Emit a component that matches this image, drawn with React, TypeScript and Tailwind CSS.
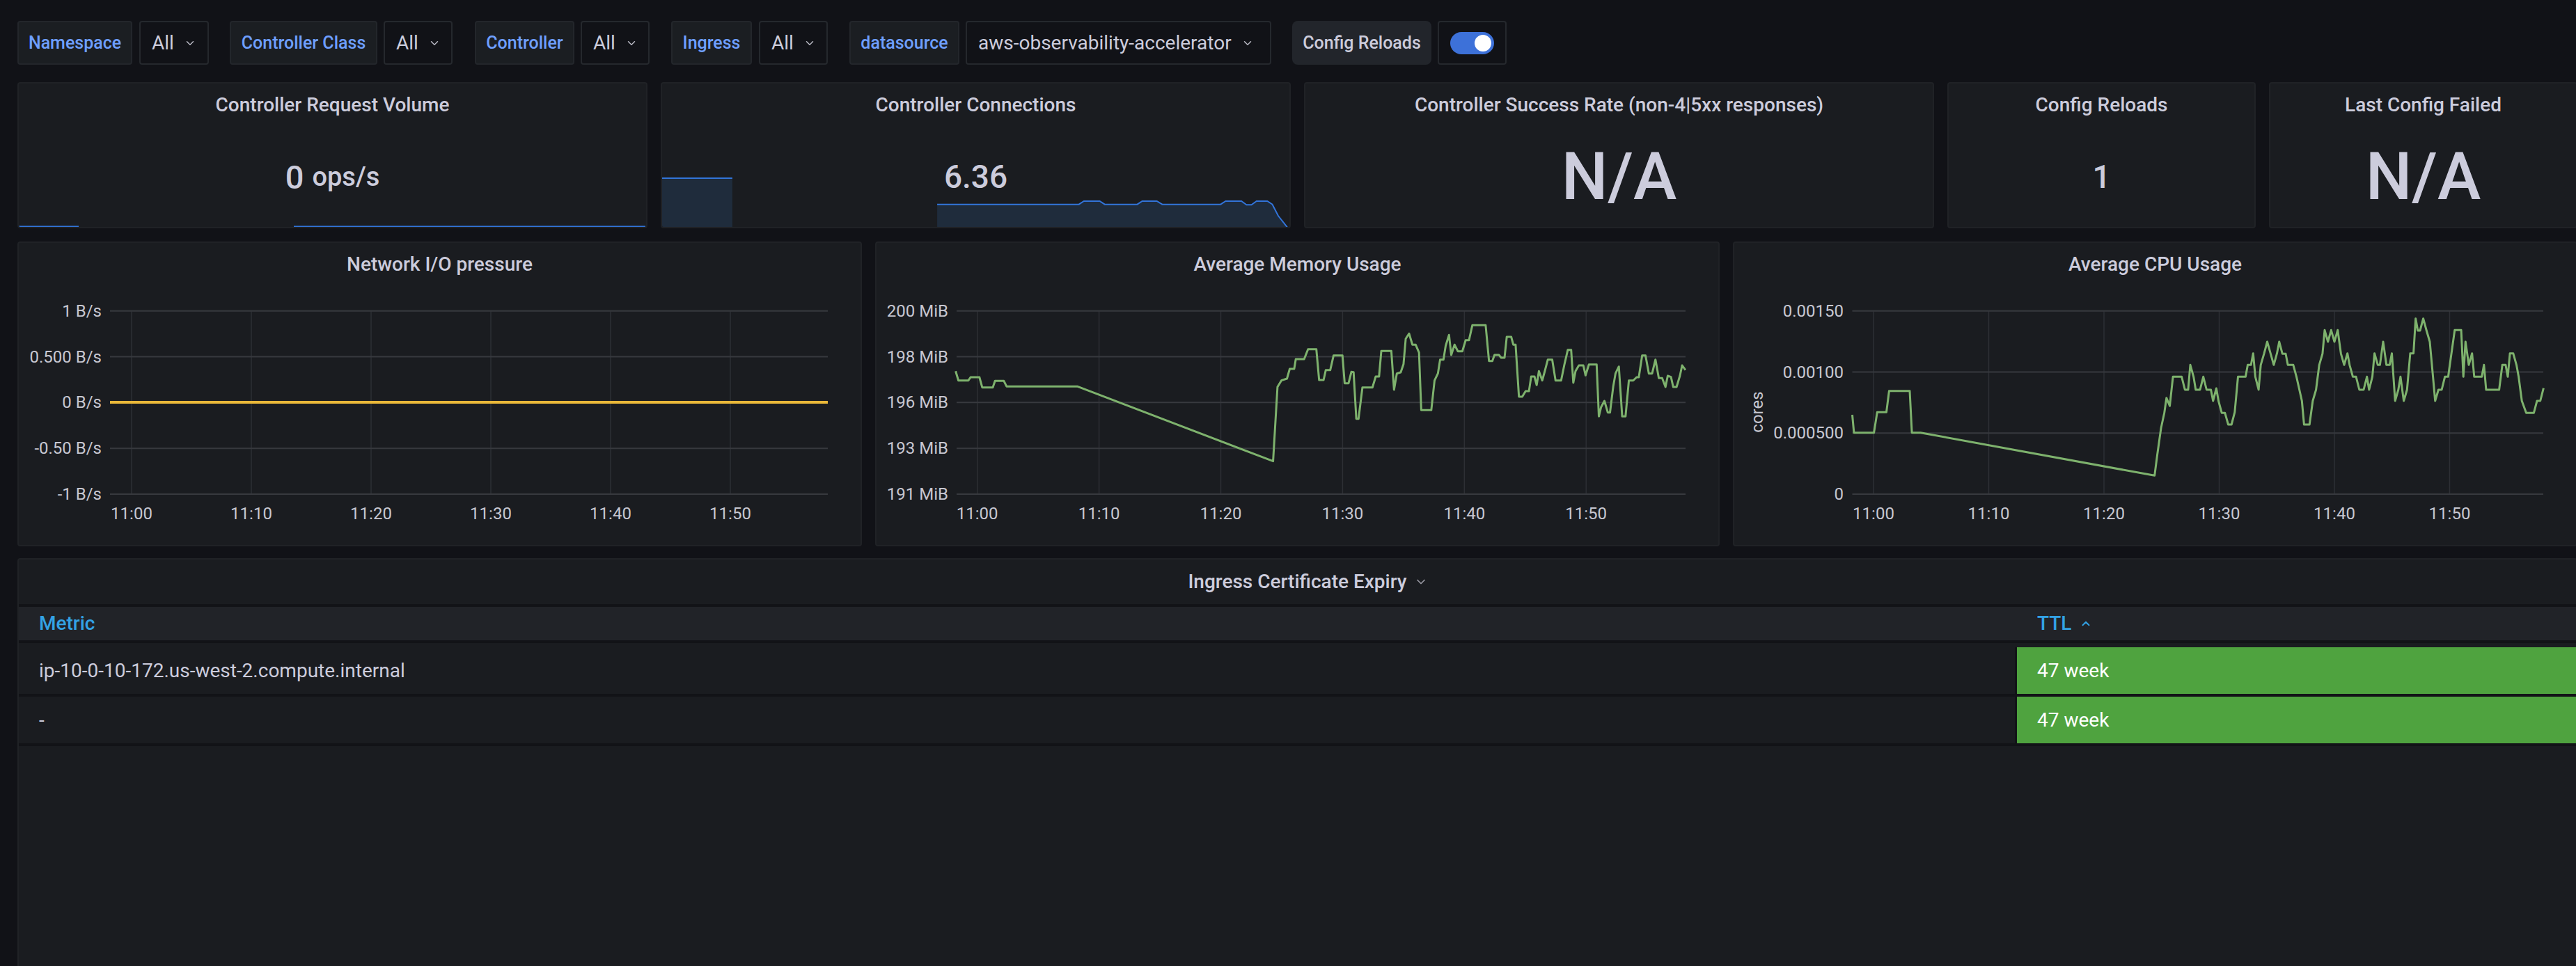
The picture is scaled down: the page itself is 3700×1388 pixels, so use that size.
import React from 'react';
import { ChevronDown, ChevronUp } from 'lucide-react';

// Grafana 7 dark theme, rendered at ~2x
const AXIS = '#c7c7d1';

type Pt = [number, number];

const toPath = (pts: Pt[], fx: (x: number) => number, fy: (y: number) => number) =>
  pts.map(([x, y], i) => `${i ? 'L' : 'M'}${fx(x).toFixed(1)},${fy(y).toFixed(1)}`).join(' ');

// ---------- Variable bar ----------

const VarLabel: React.FC<{ label: string; className: string }> = ({ label, className }) => (
  <div
    className={`flex h-[63px] items-center justify-center rounded-[4px] border-2 border-[#23262b] bg-[#1b1e22] text-[25px] font-medium text-[#6e9fff] ${className}`}
  >
    {label}
  </div>
);

const VarValue: React.FC<{ value: string; className: string }> = ({ value, className }) => (
  <div
    className={`flex h-[63px] items-center gap-[14px] rounded-[4px] border-2 border-[#25282d] bg-[#111217] pl-[16px] text-[28px] text-[#ccccdc] ${className}`}
  >
    <span>{value}</span>
    <ChevronDown size={18} strokeWidth={2} color="#b9b9c4" />
  </div>
);

const VariableBar: React.FC = () => (
  <div className="flex h-[63px] items-center">
    <VarLabel label="Namespace" className="w-[165px]" />
    <VarValue value="All" className="ml-[10px] w-[100px]" />
    <VarLabel label="Controller Class" className="ml-[30px] w-[212px]" />
    <VarValue value="All" className="ml-[9px] w-[99px]" />
    <VarLabel label="Controller" className="ml-[32px] w-[143px]" />
    <VarValue value="All" className="ml-[9px] w-[99px]" />
    <VarLabel label="Ingress" className="ml-[31px] w-[116px]" />
    <VarValue value="All" className="ml-[10px] w-[99px]" />
    <VarLabel label="datasource" className="ml-[31px] w-[158px]" />
    <VarValue value="aws-observability-accelerator" className="ml-[9px] w-[439px]" />
    <div className="ml-[30px] flex h-[63px] w-[200px] items-center justify-center rounded-[8px] bg-[#22252b] text-[25px] font-medium text-[#ccccdc]">
      Config Reloads
    </div>
    <div className="ml-[9px] flex h-[63px] w-[99px] items-center justify-center rounded-[4px] border-2 border-[#25282d] bg-[#111217]">
      <div className="flex h-[32px] w-[63px] items-center justify-end rounded-full bg-[#3d71d9] pr-[4px]">
        <div className="h-[24px] w-[24px] rounded-full bg-white" />
      </div>
    </div>
  </div>
);

// ---------- Panels ----------

const PanelTitle: React.FC<{ title: string; menu?: boolean; className?: string }> = ({ title, menu, className = 'h-[62px]' }) => (
  <div className={`flex shrink-0 items-center justify-center ${className}`}>
    <span className="relative text-[28px] font-medium text-[#ccccdc]">
      {title}
      {menu && (
        <span className="absolute left-full top-1/2 ml-[10px] -translate-y-1/2">
          <ChevronDown size={20} strokeWidth={2} color="#9a9aa4" />
        </span>
      )}
    </span>
  </div>
);

const StatPanel: React.FC<{
  title: string;
  width: number;
  span: string;
  spark?: React.ReactNode;
  children: React.ReactNode;
}> = ({ title, width, span, spark, children }) => (
  <div className={`relative flex h-[210px] flex-col overflow-hidden rounded-[4px] border-2 border-[#202226] bg-[#1a1c20] ${span}`}>
    {spark && (
      <svg
        className="absolute inset-0 h-full w-full"
        viewBox={`2 2 ${width - 4} 206`}
        preserveAspectRatio="none"
      >
        {spark}
      </svg>
    )}
    <div className="relative">
      <PanelTitle title={title} />
    </div>
    <div className="relative flex flex-1 items-center justify-center text-[#ccccdc]">{children}</div>
  </div>
);

// sparkline for Controller Connections, traced in zoom coords
const connPts: Pt[] = [
  [678, 551], [1018, 551], [1030, 537], [1068, 537], [1080, 551], [1158, 551], [1170, 537], [1205, 537],
  [1218, 551], [1358, 551], [1370, 537], [1408, 537], [1420, 553], [1432, 553], [1444, 537], [1470, 537],
  [1482, 551], [1496, 600], [1520, 655],
];
const cx = (x: number) => x / 1.668 - 9;
const cy = (y: number) => y / 3 - 8;

const ConnSpark: React.FC = () => {
  const line = toPath(connPts, cx, cy);
  return (
    <g>
      <path d="M0,138 L103,138 L103,212 L0,212 Z" fill="#1f2c3c" />
      <path d="M0,138 L103,138" stroke="#3274d9" strokeWidth={2} fill="none" />
      <path d={`${line} L${cx(678).toFixed(1)},212 Z`} fill="#1f2c3c" />
      <path d={line} stroke="#3274d9" strokeWidth={2} fill="none" />
    </g>
  );
};

const VolumeSpark: React.FC = () => (
  <g stroke="#3274d9" strokeWidth={2}>
    <line x1={0} x2={88} y1={207.5} y2={207.5} />
    <line x1={397} x2={902} y1={207.5} y2={207.5} />
  </g>
);

// ---------- Time series ----------

const X_LABELS = ['11:00', '11:10', '11:20', '11:30', '11:40', '11:50'];

interface ChartProps {
  width: number;
  ticks: { y: number; label: string }[];
  labelX: number;
  gridX0: number;
  vx0: number;
  vstep: number;
  axisLabel?: string;
  children?: React.ReactNode;
}

const TimeChart: React.FC<ChartProps> = ({ width, ticks, labelX, gridX0, vx0, vstep, axisLabel, children }) => {
  const top = ticks[0].y;
  const bottom = ticks[ticks.length - 1].y;
  const vx = X_LABELS.map((_, i) => vx0 + vstep * i);
  return (
    <svg width={width - 4} height={372} viewBox={`2 0 ${width - 4} 372`} className="block" fontFamily="Roboto, sans-serif">
      {vx.map((x) => (
        <line key={x} x1={x} x2={x} y1={top} y2={bottom} stroke="#2d2f34" strokeWidth={1.5} />
      ))}
      {ticks.map((t) => (
        <g key={t.label}>
          <line x1={gridX0} x2={1164} y1={t.y} y2={t.y} stroke="#37393e" strokeWidth={2} />
          <text x={labelX} y={t.y} textAnchor="end" dominantBaseline="central" fontSize={24} fill={AXIS}>
            {t.label}
          </text>
        </g>
      ))}
      {vx.map((x, i) => (
        <text key={`l${i}`} x={x} y={327} textAnchor="middle" dominantBaseline="central" fontSize={24} fill={AXIS}>
          {X_LABELS[i]}
        </text>
      ))}
      {axisLabel && (
        <text
          x={35}
          y={181}
          transform="rotate(-90 35 181)"
          textAnchor="middle"
          dominantBaseline="central"
          fontSize={24}
          fill={AXIS}
        >
          {axisLabel}
        </text>
      )}
      {children}
    </svg>
  );
};

const GraphPanel: React.FC<{ title: string; children: React.ReactNode }> = ({ title, children }) => (
  <div className="col-span-8 flex h-[438px] flex-col overflow-hidden rounded-[4px] border-2 border-[#202226] bg-[#1a1c20]">
    <PanelTitle title={title} />
    {children}
  </div>
);

const memPts: Pt[] = [
  [155, 580], [160, 620], [178, 620], [182, 606], [198, 606], [203, 650], [222, 650], [226, 622], [242, 622],
  [247, 646], [375, 646], [727, 968], [735, 648], [742, 620], [752, 612], [757, 570], [765, 570], [768, 528],
  [783, 528], [790, 485], [805, 485], [810, 618], [818, 618], [822, 575], [830, 575], [836, 512], [852, 512],
  [856, 632], [863, 632], [868, 583], [872, 584], [877, 785], [881, 785], [888, 650], [906, 650], [912, 603],
  [918, 603], [922, 493], [940, 493], [945, 660], [950, 590], [957, 585], [962, 550], [966, 440], [972, 418],
  [978, 466], [984, 466], [990, 500], [994, 748], [1012, 748], [1018, 620], [1024, 590], [1028, 530],
  [1034, 530], [1038, 470], [1044, 424], [1048, 510], [1054, 466], [1060, 494], [1068, 494], [1074, 446],
  [1080, 446], [1086, 382], [1110, 382], [1116, 536], [1122, 536], [1126, 510], [1134, 510], [1138, 522],
  [1144, 522], [1148, 432], [1156, 432], [1160, 466], [1164, 466], [1170, 690], [1176, 690], [1182, 666],
  [1188, 666], [1192, 603], [1198, 603], [1202, 640], [1206, 580], [1212, 620], [1216, 585], [1222, 530],
  [1230, 530], [1236, 620], [1246, 620], [1252, 550], [1258, 488], [1264, 488], [1268, 630], [1272, 580],
  [1278, 555], [1286, 555], [1290, 598], [1296, 551], [1310, 551], [1314, 775], [1318, 735], [1324, 708],
  [1330, 758], [1334, 758], [1340, 645], [1344, 590], [1350, 560], [1356, 775], [1362, 775], [1368, 620],
  [1376, 620], [1382, 606], [1386, 606], [1392, 512], [1398, 512], [1404, 590], [1410, 590], [1416, 530],
  [1422, 610], [1428, 610], [1434, 648], [1438, 600], [1444, 605], [1448, 648], [1454, 648], [1460, 600],
  [1464, 555], [1470, 575],
];

const cpuPts: Pt[] = [
  [232, 768], [235, 845], [272, 845], [278, 757], [295, 757], [300, 665], [338, 665], [342, 845], [358, 845],
  [790, 1030], [795, 940], [802, 825], [808, 760], [812, 695], [818, 730], [824, 604], [840, 604], [846, 660],
  [852, 660], [856, 553], [862, 604], [866, 660], [874, 660], [880, 604], [886, 660], [894, 660], [898, 708],
  [904, 654], [908, 708], [914, 760], [920, 760], [926, 810], [932, 810], [938, 757], [944, 604], [958, 604],
  [962, 553], [968, 553], [972, 503], [976, 604], [982, 660], [986, 553], [992, 505], [998, 453], [1004, 503],
  [1010, 553], [1016, 503], [1020, 453], [1026, 505], [1032, 505], [1036, 553], [1046, 553], [1052, 604],
  [1062, 708], [1066, 810], [1076, 810], [1082, 708], [1088, 660], [1094, 553], [1100, 505], [1104, 403],
  [1110, 453], [1116, 403], [1122, 453], [1128, 403], [1134, 505], [1140, 553], [1146, 503], [1150, 553],
  [1156, 604], [1162, 604], [1168, 660], [1176, 660], [1182, 604], [1186, 660], [1192, 604], [1196, 503],
  [1202, 553], [1206, 553], [1212, 453], [1218, 553], [1224, 553], [1228, 503], [1234, 708], [1240, 660],
  [1244, 604], [1250, 708], [1256, 660], [1262, 503], [1268, 503], [1272, 353], [1276, 405], [1280, 405],
  [1286, 353], [1292, 405], [1298, 453], [1304, 604], [1308, 708], [1314, 660], [1320, 660], [1326, 604],
  [1332, 604], [1338, 503], [1344, 403], [1356, 403], [1360, 604], [1364, 453], [1370, 553], [1376, 503],
  [1380, 604], [1394, 604], [1398, 553], [1402, 660], [1426, 660], [1432, 553], [1438, 553], [1442, 604],
  [1446, 503], [1452, 503], [1458, 553], [1462, 604], [1468, 708], [1476, 760], [1490, 760], [1496, 708],
  [1502, 708], [1508, 653],
];

const bodyY = (y: number) => y / 3 - 71;

// ---------- Table ----------

const CertTable: React.FC = () => (
  <div className="col-span-24 flex h-[640px] flex-col overflow-hidden rounded-[4px] border-2 border-[#202226] bg-[#1a1c20]">
    <PanelTitle title="Ingress Certificate Expiry" menu className="h-[64px]" />
    <div className="h-[4px] shrink-0 bg-[#121317]" />
    {/* Header */}
    <div className="flex h-[48px] shrink-0 items-center bg-[#212328] text-[28px] font-medium text-[#33a2e5]">
      <div className="w-[2867px] pl-[29px]">Metric</div>
      <div className="flex items-center gap-[12px] pl-[32px]">
        TTL
        <ChevronUp size={18} strokeWidth={2.5} color="#33a2e5" />
      </div>
    </div>
    <div className="h-[4px] shrink-0 bg-[#121317]" />
    <div className="h-[6px] shrink-0" />
    {[
      'ip-10-0-10-172.us-west-2.compute.internal',
      '-',
    ].map((metric) => (
      <React.Fragment key={metric}>
        <div className="flex h-[67px] shrink-0 items-center text-[28px]">
          <div className="w-[2867px] pl-[29px] text-[#ccccdc]">{metric}</div>
          <div className="flex h-full flex-1 items-center border-l-[3px] border-[#121317] bg-[#4fa33f] pl-[29px] text-white">
            47 week
          </div>
        </div>
        <div className="h-[4px] shrink-0 bg-[#121317]" />
      </React.Fragment>
    ))}
  </div>
);

// ---------- Page ----------

export default function App() {
  return (
    <div className="h-[1388px] w-[3700px] overflow-hidden bg-[#111217] pl-[25px] pt-[30px] font-['Roboto','Noto_Sans',sans-serif] text-[#ccccdc]">
      <VariableBar />

      {/* Stat row */}
      <div className="mt-[25px] grid w-[3677px] grid-cols-24 gap-x-[19px]">
        <StatPanel title="Controller Request Volume" width={905} span="col-span-6" spark={<VolumeSpark />}>
          <span className="text-[47px] font-medium leading-none">0</span>
          <span className="ml-[12px] text-[38px] font-medium leading-none">ops/s</span>
        </StatPanel>
        <StatPanel title="Controller Connections" width={906} span="col-span-6" spark={<ConnSpark />}>
          <span className="text-[46px] font-medium leading-none">6.36</span>
        </StatPanel>
        <StatPanel title="Controller Success Rate (non-4|5xx responses)" width={906} span="col-span-6">
          <span className="text-[94px] font-medium leading-none">N/A</span>
        </StatPanel>
        <StatPanel title="Config Reloads" width={443} span="col-span-3">
          <span className="text-[46px] font-medium leading-none">1</span>
        </StatPanel>
        <StatPanel title="Last Config Failed" width={443} span="col-span-3">
          <span className="text-[94px] font-medium leading-none">N/A</span>
        </StatPanel>
      </div>

      {/* Graph row */}
      <div className="mt-[19px] grid w-[3677px] grid-cols-24 gap-x-[19px]">
        <GraphPanel title="Network I/O pressure">
          <TimeChart
            width={1213}
            labelX={121}
            gridX0={133}
            vx0={164}
            vstep={172}
            ticks={[
              { y: 35.7, label: '1 B/s' },
              { y: 101.5, label: '0.500 B/s' },
              { y: 167.3, label: '0 B/s' },
              { y: 233.2, label: '-0.50 B/s' },
              { y: 299, label: '-1 B/s' },
            ]}
          >
            <line x1={133} x2={1164} y1={167} y2={167} stroke="#eab839" strokeWidth={4} />
          </TimeChart>
        </GraphPanel>
        <GraphPanel title="Average Memory Usage">
          <TimeChart
            width={1212}
            labelX={105}
            gridX0={117}
            vx0={146.7}
            vstep={174.9}
            ticks={[
              { y: 35.7, label: '200 MiB' },
              { y: 101.5, label: '198 MiB' },
              { y: 167.3, label: '196 MiB' },
              { y: 233.2, label: '193 MiB' },
              { y: 299, label: '191 MiB' },
            ]}
          >
            <path
              d={toPath(memPts, (x) => x / 1.2544 - 8, bodyY)}
              stroke="#7eb26d"
              strokeWidth={3}
              fill="none"
              strokeLinejoin="round"
            />
          </TimeChart>
        </GraphPanel>
        <GraphPanel title="Average CPU Usage">
          <TimeChart
            width={1213}
            labelX={159}
            gridX0={171.5}
            vx0={202}
            vstep={165.5}
            axisLabel="cores"
            ticks={[
              { y: 35.7, label: '0.00150' },
              { y: 123.5, label: '0.00100' },
              { y: 211.3, label: '0.000500' },
              { y: 299, label: '0' },
            ]}
          >
            <path
              d={toPath(cpuPts, (x) => x / 1.2852 - 9, bodyY)}
              stroke="#7eb26d"
              strokeWidth={3}
              fill="none"
              strokeLinejoin="round"
            />
          </TimeChart>
        </GraphPanel>
      </div>

      {/* Table row */}
      <div className="mt-[17px] grid w-[3677px] grid-cols-24">
        <CertTable />
      </div>
    </div>
  );
}
